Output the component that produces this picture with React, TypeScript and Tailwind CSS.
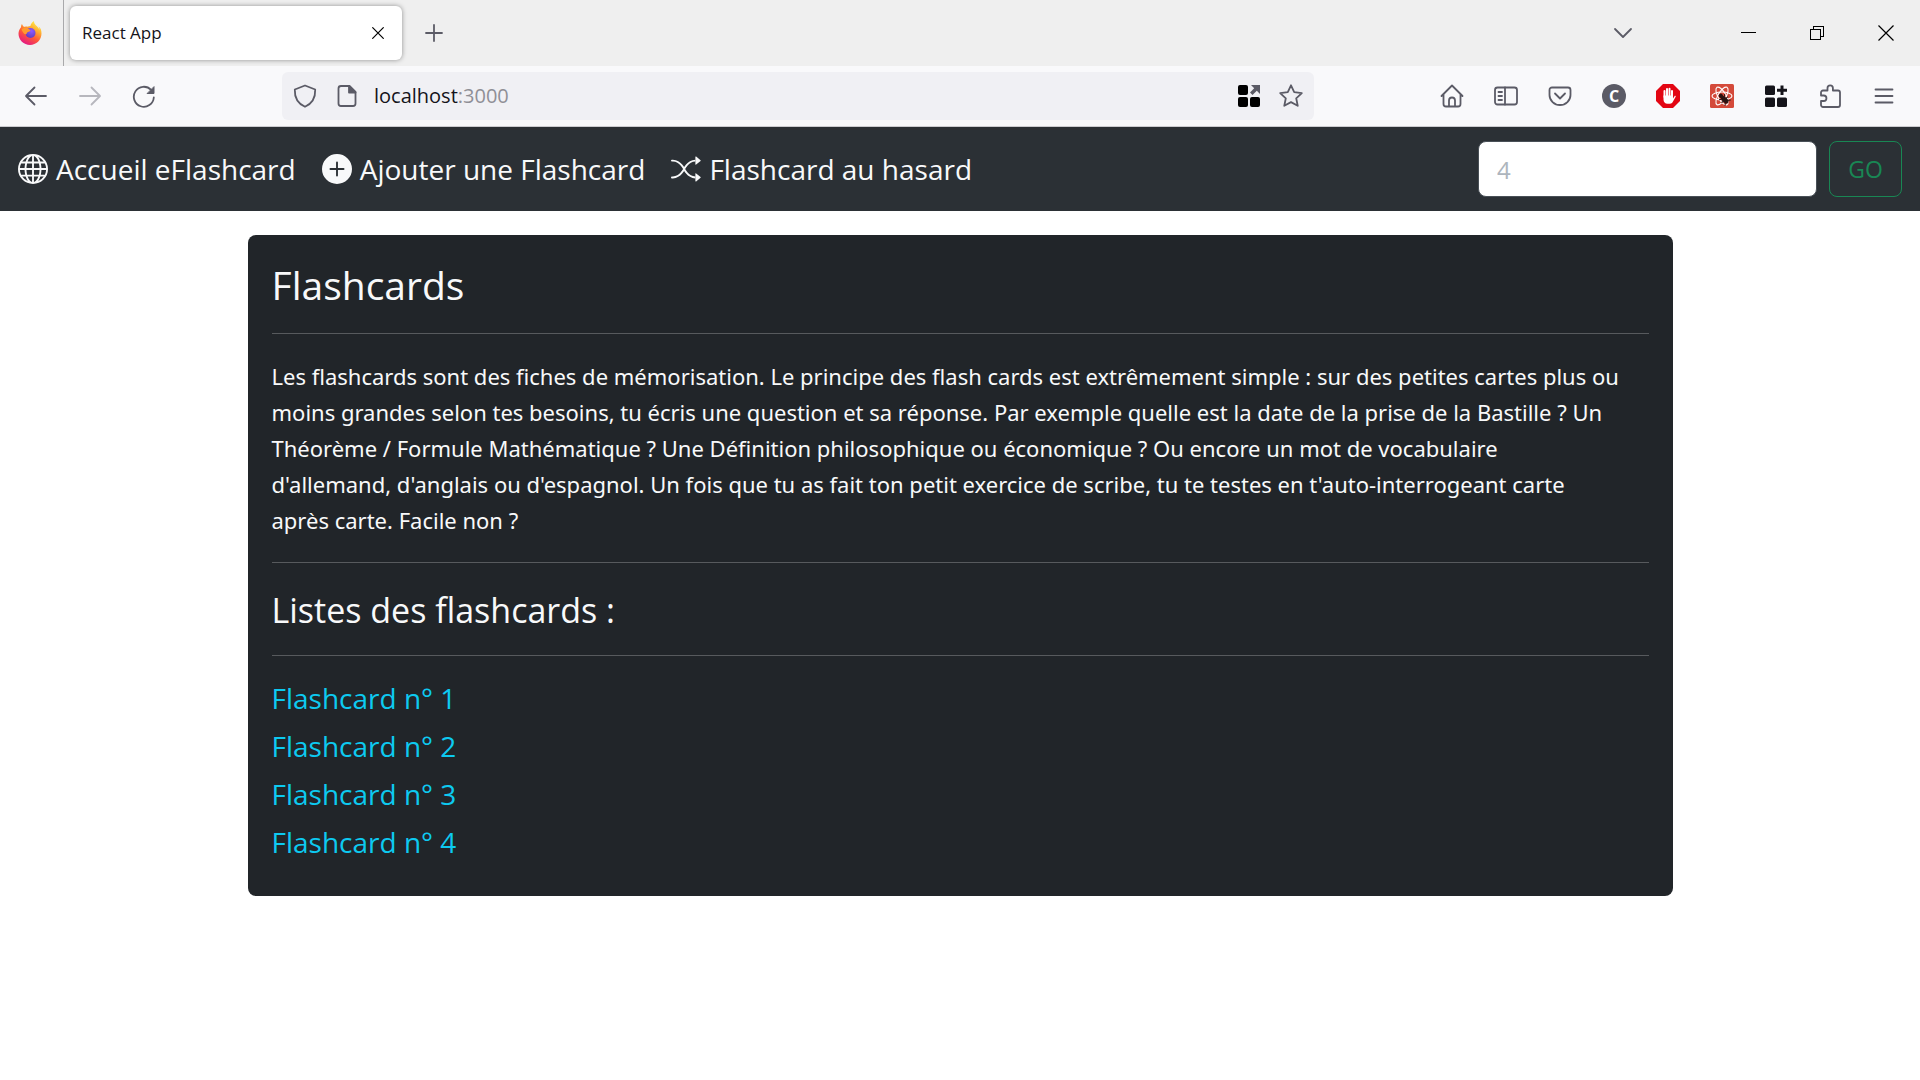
import { BsGlobe, BsPlusCircleFill, BsShuffle } from "react-icons/bs";
import type { ReactNode } from "react";

function Icon({ children, className = "size-6", label }: { children: ReactNode; className?: string; label?: string }) {
  return (
    <svg viewBox="0 0 24 24" fill="none" stroke="currentColor" strokeWidth="1.8" strokeLinecap="round" strokeLinejoin="round" className={className} aria-hidden={label ? undefined : true} aria-label={label}>
      {children}
    </svg>
  );
}

function FirefoxLogo() {
  return (
    <svg viewBox="0 0 24 24" className="size-6" aria-label="Firefox">
      <defs>
        <linearGradient id="ff-body" x1="0.85" y1="0.05" x2="0.3" y2="1">
          <stop offset="0" stopColor="#fff44f" />
          <stop offset="0.3" stopColor="#ffb030" />
          <stop offset="0.6" stopColor="#ff5a36" />
          <stop offset="1" stopColor="#e31587" />
        </linearGradient>
        <radialGradient id="ff-core" cx="0.6" cy="0.3" r="0.8">
          <stop offset="0" stopColor="#9059ff" />
          <stop offset="1" stopColor="#5b3bb5" />
        </radialGradient>
      </defs>
      <path fill="url(#ff-body)" d="M22.900 8.600c-.5-1.300-1.600-2.600-2.400-3 .7 1.300 1 2.600 1.200 3.500C20.400 5.900 17.500 4.400 16.500 2.500 16 1.600 16 .8 16 0c-2.600 1.500-3.500 4.200-3.600 5-1 .1-2 .3-2.900.8-.5-.6-2.700-.2-3.400.1C5 5.200 4.300 3.700 4 3 3.500 3.700 3 4.700 3 6.200 1.500 8 .5 10.300.5 12.800.5 19 5.700 24 12 24s11.500-5 11.500-11.500c0-1.400-.2-2.700-.6-3.900Z" />
      <circle cx="12.500" cy="12" r="5" fill="url(#ff-core)" />
      <path fill="#ff9a2e" d="M3.500 8.500c1.800-1.900 4.200-2 6-1.200l3 1.900c-.2 1.200-1.700 1.400-2.600 1.800-1.100.5-.9 1.700-1.800 2.200-1.700.8-3.400-2-4.600-4.700Z" />
    </svg>
  );
}

function ToolButton({ label, children, className = "w-[54px] text-[#5b5b66]" }: { label: string; children: ReactNode; className?: string }) {
  return (
    <button type="button" aria-label={label} className={`flex h-10 shrink-0 items-center justify-center ${className}`}>
      {children}
    </button>
  );
}

function TabStrip() {
  return (
    <div className="flex h-[66px] items-stretch bg-[#efefef]">
      <div className="flex w-16 items-center justify-center border-r border-[#a9a9ab] pr-1">
        <FirefoxLogo />
      </div>
      <div className="my-1.5 ml-1.5 flex w-[332px] items-center justify-between rounded-md bg-white pr-4 pl-3 shadow-[0_0_5px_rgba(0,0,0,0.4)]">
        <span className="text-[17px] text-[#15141a]">React App</span>
        <button type="button" aria-label="Fermer l'onglet" className="flex size-4 items-center justify-center text-black">
          <Icon className="size-4"><path d="M4 4l16 16M20 4 4 20" /></Icon>
        </button>
      </div>
      <button type="button" aria-label="Nouvel onglet" className="flex w-16 items-center justify-center text-[#5b5b66]">
        <Icon className="size-6"><path d="M12 4v16M4 12h16" /></Icon>
      </button>
      <div className="ml-auto flex items-center text-black">
        <button type="button" aria-label="Lister les onglets" className="mr-14 flex w-[69px] justify-center text-[#5b5b66]">
          <Icon><path d="m4 8 8 8 8-8" /></Icon>
        </button>
        <button type="button" aria-label="Réduire" className="flex w-[69px] justify-center">
          <svg viewBox="0 0 16 16" className="size-4" fill="none" stroke="currentColor" shapeRendering="crispEdges"><path d="M0.500 7.500h15" /></svg>
        </button>
        <button type="button" aria-label="Restaurer" className="flex w-[69px] justify-center">
          <svg viewBox="0 0 16 16" className="size-4" fill="none" stroke="currentColor" shapeRendering="crispEdges"><path d="M1.500 4.500h10v10h-10zM4.500 4V1.500h10v10H12" /></svg>
        </button>
        <button type="button" aria-label="Fermer" className="flex w-[69px] justify-center">
          <svg viewBox="0 0 16 16" className="size-4" fill="none" stroke="currentColor" strokeWidth="1.200"><path d="m.5.5 15 15M15.500.5l-15 15" /></svg>
        </button>
      </div>
    </div>
  );
}

function Toolbar() {
  return (
    <div className="flex h-[61px] items-center border-b border-[#ccccd0] bg-[#f9f9fb] px-[9px]">
      <ToolButton label="Reculer">
        <Icon><path d="M22 12H2.500M10.500 3.500 2 12l8.500 8.500" /></Icon>
      </ToolButton>
      <ToolButton label="Avancer" className="w-[54px] text-[#b7b7bd]">
        <Icon><path d="M2 12h19.500M13.500 3.500 22 12l-8.500 8.500" /></Icon>
      </ToolButton>
      <ToolButton label="Actualiser">
        <Icon>
          <path d="M21.800 13.500a10 10 0 1 1-2.700-7.600" />
          <path d="M22 3v6.500h-6.500z" fill="currentColor" strokeWidth="1" />
        </Icon>
      </ToolButton>
      <div className="mr-[111px] ml-[111px] flex h-12 min-w-0 grow items-center rounded-md bg-[#f0f0f4] px-[11px] text-[#5b5b66]">
        <Icon className="size-6 shrink-0"><path d="M12 1.500 22.200 5.500c.3 7.500-3 14-10.200 17.300C4.800 19.500 1.500 13 1.800 5.500z" /></Icon>
        <Icon className="ml-[18px] size-6 shrink-0">
          <path d="M14.500 2H6a2.500 2.500 0 0 0-2.500 2.500v15A2.500 2.500 0 0 0 6 22h12a2.500 2.500 0 0 0 2.500-2.500V8z" />
          <path d="M14 2v6.500h6.500z" fill="currentColor" />
        </Icon>
        <a href="#" className="ml-[15px] grow text-xl text-[#15141a]">localhost<span className="text-[#8f8f96]">:3000</span></a>
        <svg viewBox="0 0 24 24" className="size-6 shrink-0" fill="#000" aria-hidden="true">
          <rect x="1" y="1" width="10" height="10" rx="2" />
          <rect x="1" y="13" width="10" height="10" rx="2" />
          <rect x="13" y="13" width="10" height="10" rx="2" />
          <path fill="#5b5b66" d="M14 1h9v9l-3.200-3.200L15.500 11 13 8.500l4.200-4.200z" />
        </svg>
        <button type="button" aria-label="Marquer cette page" className="ml-[18px] shrink-0">
          <Icon><path d="m12 1.300 3.200 6.900 7.600.9-5.600 5.200 1.500 7.500L12 18.100l-6.700 3.700 1.500-7.500L1.200 9.100l7.600-.9z" /></Icon>
        </button>
      </div>
      <div className="flex">
        <ToolButton label="Accueil">
          <Icon><path d="M1.500 12 12 1.500 22.500 12M3.500 10.500V20A2.500 2.500 0 0 0 6 22.500h12a2.500 2.500 0 0 0 2.500-2.500v-9.500M9 22v-5.500a3 3 0 0 1 6 0V22" /></Icon>
        </ToolButton>
        <ToolButton label="Panneau latéral">
          <Icon><rect x="1" y="3.500" width="22" height="17" rx="2.500" /><path d="M11 3.500v17M4.500 8H8M4.500 12H8M4.500 16H8" /></Icon>
        </ToolButton>
        <ToolButton label="Pocket">
          <Icon><path d="M4 3.500h16A2.500 2.500 0 0 1 22.500 6v5a10.500 10 0 0 1-21 0V6A2.500 2.500 0 0 1 4 3.500zM7 9.500l5 5 5-5" /></Icon>
        </ToolButton>
        <ToolButton label="Compte">
          <span className="flex size-6 items-center justify-center rounded-full bg-[#5b5b66] text-base leading-none font-bold text-white">C</span>
        </ToolButton>
        <ToolButton label="Bloqueur de publicités">
          <svg viewBox="0 0 24 24" className="size-6">
            <path fill="#e30613" d="M7 0h10l7 7v10l-7 7H7l-7-7V7z" />
            <path fill="none" stroke="#fff" strokeWidth="2" strokeLinecap="round" d="M8.500 13V7M11 12V5M13.500 12V4.800M16 12V7" />
            <path fill="#fff" d="M7.500 11.500H17v3l1.500-2.300c.6-.7 1.500-.2 1.200.6l-3 5.200c-.6 1-1.400 1.700-2.700 1.700h-2.500c-2.500 0-4-1.700-4-4.200z" />
          </svg>
        </ToolButton>
        <ToolButton label="React DevTools">
          <svg viewBox="0 0 24 24" className="size-6" fill="none">
            <rect width="24" height="24" rx="1.500" fill="#d44a3a" />
            <g stroke="#fff" strokeWidth="1.100">
              <ellipse cx="12" cy="12" rx="10" ry="4" />
              <ellipse cx="12" cy="12" rx="10" ry="4" transform="rotate(60 12 12)" />
              <ellipse cx="12" cy="12" rx="10" ry="4" transform="rotate(120 12 12)" />
            </g>
            <g transform="rotate(-45 14 15)" stroke="#2a1412" strokeWidth="1">
              <ellipse cx="14" cy="16" rx="2" ry="4" fill="#2a1412" />
              <circle cx="14" cy="10.500" r="1.600" fill="#2a1412" />
              <path d="M10 12l3 2M9.500 16h9M10 20.500l3-2.500M18 12l-3 2M18 20.500l-3-2.500" />
            </g>
          </svg>
        </ToolButton>
        <ToolButton label="Applications">
          <svg viewBox="0 0 24 24" className="size-6" fill="#15141a">
            <rect x="1" y="1.500" width="10" height="9.500" rx="1.500" />
            <rect x="1" y="13.500" width="10" height="9.500" rx="1.500" />
            <rect x="13" y="13.500" width="10" height="9.500" rx="1.500" />
            <path d="M16.500 1.500h3v3.200H23v3h-3.500V11h-3V7.700H13v-3h3.500z" />
          </svg>
        </ToolButton>
        <ToolButton label="Extensions">
          <Icon><path d="M3 11V8.500a2 2 0 0 1 2-2h4.500V4a2.700 2.700 0 0 1 5.400 0v2.500H20a2 2 0 0 1 2 2V21a2 2 0 0 1-2 2H5a2 2 0 0 1-2-2v-4h2.700a2.700 2.700 0 0 0 0-5.500H3z" /></Icon>
        </ToolButton>
        <ToolButton label="Menu">
          <Icon><path d="M3.500 5.500h17M3.500 12h17M3.500 18.500h17" /></Icon>
        </ToolButton>
      </div>
    </div>
  );
}

function NavBar() {
  return (
    <nav className="flex h-[84px] items-center gap-[26px] bg-[#2b3035] px-[18px] text-[28px] text-[#f8f9fa]">
      <a href="#" className="flex items-center gap-2"><BsGlobe className="size-[30px]" aria-hidden="true" />Accueil eFlashcard</a>
      <a href="#" className="flex items-center gap-2"><BsPlusCircleFill className="size-[30px]" aria-hidden="true" />Ajouter une Flashcard</a>
      <a href="#" className="flex items-center gap-2"><BsShuffle className="size-[30px]" aria-hidden="true" />Flashcard au hasard</a>
      <form className="ml-auto flex gap-3" onSubmit={(e) => e.preventDefault()}>
        <input type="text" aria-label="Numéro de flashcard" placeholder="4" className="h-14 w-[339px] rounded-lg border border-[#495057] bg-white px-[18px] text-2xl text-[#212529] placeholder:text-[#adb5bd]" />
        <button type="submit" className="h-14 w-[73px] rounded-lg border border-[#198754] text-[23px] text-[#198754]">GO</button>
      </form>
    </nav>
  );
}

const cards = [1, 2, 3, 4];

export default function App() {
  return (
    <div className="min-h-screen bg-white font-['Open_Sans',sans-serif]">
      <TabStrip />
      <Toolbar />
      <NavBar />
      <main className="mx-auto mt-6 max-w-[1425px] rounded-lg bg-[#212529] px-6 pt-6 pb-[30px] text-[#f8f9fa]">
        <h1 className="text-[39px] leading-[52px]">Flashcards</h1>
        <hr className="mt-[22px] mb-6 border-[#575a5d]" />
        <p className="font-['Noto_Sans',sans-serif] text-[22px] leading-9">
          Les flashcards sont des fiches de mémorisation. Le principe des flash cards est extrêmement simple : sur des petites cartes plus ou moins grandes selon tes besoins, tu écris une question et sa réponse. Par exemple quelle est la date de la prise de la Bastille ? Un Théorème / Formule Mathématique ? Une Définition philosophique ou économique ? Ou encore un mot de vocabulaire
          <br />
          d'allemand, d'anglais ou d'espagnol. Un fois que tu as fait ton petit exercice de scribe, tu te testes en t'auto-interrogeant carte
          <br />
          après carte. Facile non ?
        </p>
        <hr className="my-6 border-[#575a5d]" />
        <h2 className="text-[34px] leading-[46px]">Listes des flashcards :</h2>
        <hr className="mt-[22px] mb-[18px] border-[#575a5d]" />
        <ul className="text-[28px] leading-[48px] text-[#0dcaf0]">
          {cards.map((n) => (
            <li key={n}><a href="#">Flashcard n° {n}</a></li>
          ))}
        </ul>
      </main>
    </div>
  );
}
